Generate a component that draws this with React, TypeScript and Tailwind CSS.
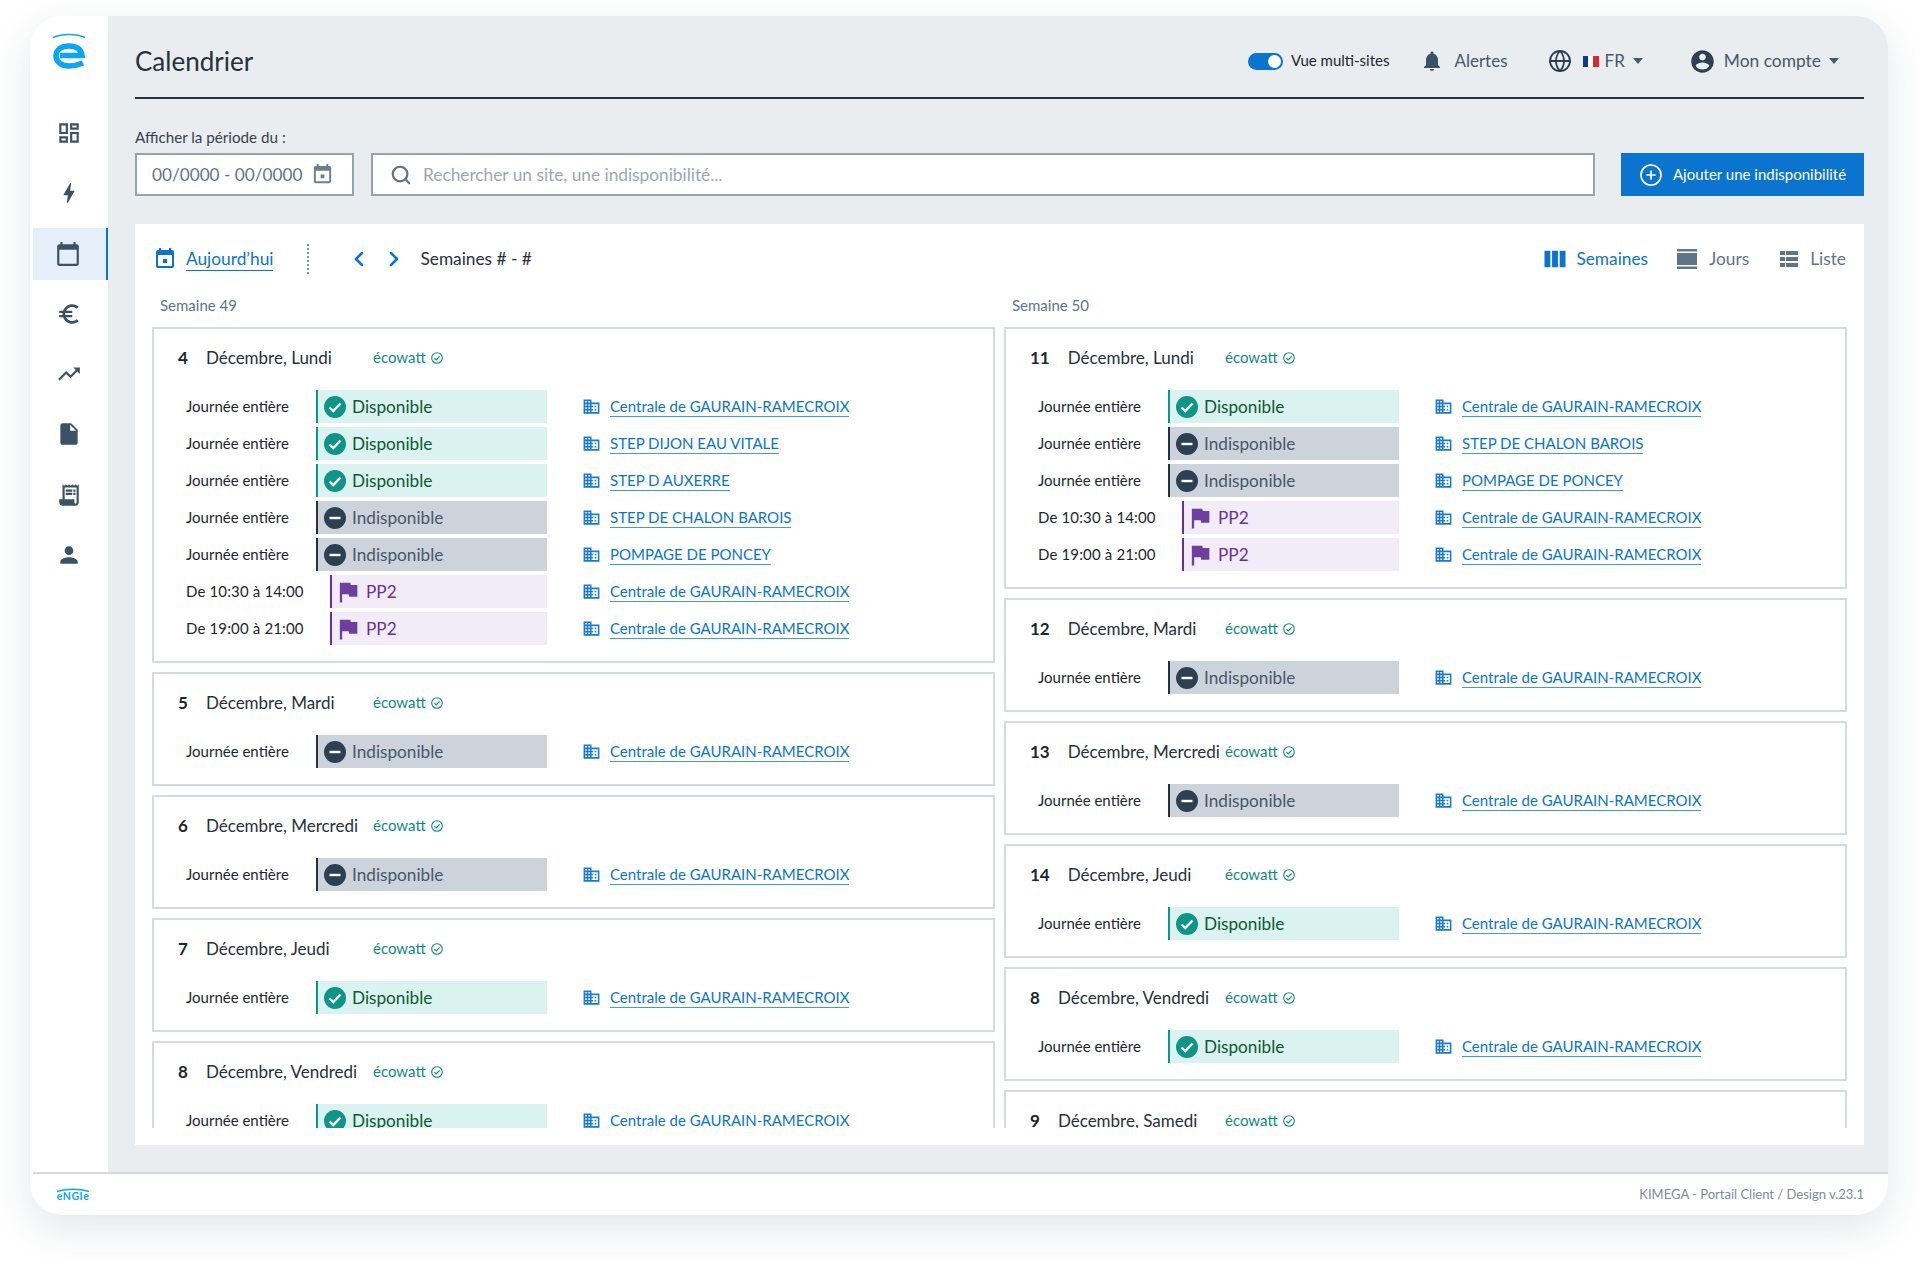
import React from 'react';
import { ChevronLeft, ChevronRight, CirclePlus, Globe, Search } from 'lucide-react';

const paths = {
    dashboard: 'M19 5v2h-4V5h4M9 5v6H5V5h4m10 8v6h-4v-6h4M9 17v2H5v-2h4M21 3h-8v6h8V3zM11 3H3v10h8V3zm10 8h-8v10h8V11zm-10 4H3v6h8v-6z',
    bolt: 'M11 21h-1l1-7H7.5c-.58 0-.57-.32-.38-.66.19-.34.05-.08.07-.12C8.48 10.94 10.42 7.54 13 3h1l-1 7h3.5c.49 0 .56.33.47.51l-.07.15C12.96 17.55 11 21 11 21z',
    calendar: 'M20 3h-1V1h-2v2H7V1H5v2H4c-1.1 0-2 .9-2 2v16c0 1.1.9 2 2 2h16c1.1 0 2-.9 2-2V5c0-1.1-.9-2-2-2zm0 18H4V8h16v13z',
    event: 'M14 12h-4v4h4v-4zM16 1v2H8V1H6v2H5c-1.11 0-1.99.9-1.99 2L3 19c0 1.1.89 2 2 2h14c1.1 0 2-.9 2-2V5c0-1.1-.9-2-2-2h-1V1h-2zm3 18H5V8h14v11z',
    euro: 'M15 18.5c-2.51 0-4.68-1.42-5.76-3.5H15v-2H8.58c-.05-.33-.08-.66-.08-1s.03-.67.08-1H15V9H9.24C10.32 6.92 12.5 5.5 15 5.5c1.61 0 3.09.59 4.23 1.57L21 5.3C19.41 3.87 17.3 3 15 3c-3.92 0-7.24 2.51-8.48 6H3v2h3.06c-.04.33-.06.66-.06 1s.02.67.06 1H3v2h3.52c1.24 3.49 4.56 6 8.48 6 2.31 0 4.41-.87 6-2.3l-1.78-1.77c-1.13.98-2.6 1.57-4.22 1.57z',
    trending: 'M16 6l2.29 2.29-4.88 4.88-4-4L2 16.59 3.41 18l6-6 4 4 6.3-6.29L22 12V6z',
    file: 'M6 2c-1.1 0-1.99.9-1.99 2L4 20c0 1.1.89 2 1.99 2H18c1.1 0 2-.9 2-2V8l-6-6H6zm7 7V3.5L18.5 9H13z',
    receipt: 'M19.5 3.5L18 2l-1.5 1.5L15 2l-1.5 1.5L12 2l-1.5 1.5L9 2 7.5 3.5 6 2v14H3v3c0 1.66 1.34 3 3 3h12c1.66 0 3-1.34 3-3V2l-1.5 1.5zM19 19c0 .55-.45 1-1 1s-1-.45-1-1v-3H8V5h11v14zM9 7h6v2H9zm7 0h2v2h-2zM9 10h6v2H9zm7 0h2v2h-2z',
    person: 'M12 12c2.21 0 4-1.79 4-4s-1.79-4-4-4-4 1.79-4 4 1.79 4 4 4zm0 2c-2.67 0-8 1.34-8 4v2h16v-2c0-2.66-5.33-4-8-4z',
    bell: 'M12 22c1.1 0 2-.9 2-2h-4c0 1.1.89 2 2 2zm6-6v-5c0-3.07-1.64-5.64-4.5-6.32V4c0-.83-.67-1.5-1.5-1.5s-1.5.67-1.5 1.5v.68C7.63 5.36 6 7.92 6 11v5l-2 2v1h16v-1l-2-2z',
    account: 'M12 2C6.48 2 2 6.48 2 12s4.48 10 10 10 10-4.48 10-10S17.52 2 12 2zm0 3c1.66 0 3 1.34 3 3s-1.34 3-3 3-3-1.34-3-3 1.34-3 3-3zm0 14.2c-2.5 0-4.71-1.28-6-3.22.03-1.99 4-3.08 6-3.08 1.99 0 5.97 1.09 6 3.08-1.29 1.94-3.5 3.22-6 3.22z',
    flag: 'M14.4 6L14 4H5v17h2v-7h5.6l.4 2h7V6z',
    domain: 'M12 7V3H2v18h20V7H12zM6 19H4v-2h2v2zm0-4H4v-2h2v2zm0-4H4V9h2v2zm0-4H4V5h2v2zm4 12H8v-2h2v2zm0-4H8v-2h2v2zm0-4H8V9h2v2zm0-4H8V5h2v2zm10 12h-8v-2h2v-2h-2v-2h2v-2h-2V9h8v10zm-2-8h-2v2h2v-2zm0 4h-2v2h2v-2z',
    weeks: 'M3 5h5v14H3zM9.5 5h5v14h-5zM16 5h5v14h-5z',
    days: 'M2 2h20v2.5H2zM2 6h20v12H2zM2 19.5h20V22H2z',
    list: 'M3 4h5v4H3zM9 4h12v4H9zM3 10h5v4H3zM9 10h12v4H9zM3 16h5v4H3zM9 16h12v4H9z',
};

const Icon = ({ name, className }: { name: keyof typeof paths; className: string }) => (
    <svg viewBox="0 0 24 24" fill="currentColor" className={className}>
        <path d={paths[name]} />
    </svg>
);

const Caret = ({ className }: { className: string }) => (
    <svg viewBox="0 0 10 6" fill="currentColor" className={className}>
        <path d="M0 0h10L5 6z" />
    </svg>
);

type Status = 'dispo' | 'indispo' | 'pp2';

interface Row {
    label: string;
    status: Status;
    site: string;
}

interface Day {
    num: string;
    date: string;
    rows: Row[];
}

const GAURAIN = 'Centrale de GAURAIN-RAMECROIX';
const full = (status: Status, site: string = GAURAIN): Row => ({ label: 'Journée entière', status, site });
const pp2 = (label: string): Row => ({ label, status: 'pp2', site: GAURAIN });

const week49: Day[] = [
    {
        num: '4',
        date: 'Décembre, Lundi',
        rows: [
            full('dispo'),
            full('dispo', 'STEP DIJON EAU VITALE'),
            full('dispo', 'STEP D AUXERRE'),
            full('indispo', 'STEP DE CHALON BAROIS'),
            full('indispo', 'POMPAGE DE PONCEY'),
            pp2('De 10:30 à 14:00'),
            pp2('De 19:00 à 21:00'),
        ],
    },
    { num: '5', date: 'Décembre, Mardi', rows: [full('indispo')] },
    { num: '6', date: 'Décembre, Mercredi', rows: [full('indispo')] },
    { num: '7', date: 'Décembre, Jeudi', rows: [full('dispo')] },
    { num: '8', date: 'Décembre, Vendredi', rows: [full('dispo')] },
];

const week50: Day[] = [
    {
        num: '11',
        date: 'Décembre, Lundi',
        rows: [
            full('dispo'),
            full('indispo', 'STEP DE CHALON BAROIS'),
            full('indispo', 'POMPAGE DE PONCEY'),
            pp2('De 10:30 à 14:00'),
            pp2('De 19:00 à 21:00'),
        ],
    },
    { num: '12', date: 'Décembre, Mardi', rows: [full('indispo')] },
    { num: '13', date: 'Décembre, Mercredi', rows: [full('indispo')] },
    { num: '14', date: 'Décembre, Jeudi', rows: [full('dispo')] },
    { num: '8', date: 'Décembre, Vendredi', rows: [full('dispo')] },
    { num: '9', date: 'Décembre, Samedi', rows: [full('dispo')] },
];

const StatusBar = ({ status }: { status: Status }) => {
    if (status === 'dispo') {
        return (
            <div className="flex h-[33px] w-[231px] items-center gap-[6px] border-l-2 border-[#0f9488] bg-[#daf3f1] pl-[6px] text-[17.2px] text-[#0b5a2c]">
                <svg viewBox="0 0 22 22" className="h-[22px] w-[22px]">
                    <circle cx="11" cy="11" r="11" fill="#0f9488" />
                    <path d="M5.5 11.5l3.8 3.6 7.2-7.6" fill="none" stroke="#fff" strokeWidth="2.4" />
                </svg>
                Disponible
            </div>
        );
    }
    if (status === 'indispo') {
        return (
            <div className="flex h-[33px] w-[231px] items-center gap-[6px] border-l-2 border-[#1f3446] bg-[#ccd3da] pl-[6px] text-[17.2px] text-[#46586a]">
                <svg viewBox="0 0 22 22" className="h-[22px] w-[22px]">
                    <circle cx="11" cy="11" r="11" fill="#2b4053" />
                    <rect x="5.5" y="9.8" width="11" height="2.4" fill="#fff" />
                </svg>
                Indisponible
            </div>
        );
    }
    return (
        <div className="flex h-[33px] w-[217px] items-center gap-[4px] border-l-2 border-[#6b2f9c] bg-[#f1ecf7] pl-[2px] text-[17.2px] text-[#6b2f9c]">
            <Icon name="flag" className="h-7 w-7 text-[#6e3f9f]" />
            PP2
        </div>
    );
};

const DayCard = ({ day }: { day: Day }) => (
    <div className="shrink-0 border-2 border-[#d5dbe3] pt-[17px] pb-4 pl-6">
        <div className="flex h-6 items-center">
            <div className="flex w-[195px] items-center gap-[18px] text-[17px] text-[#25313d]">
                <span className="font-bold text-[#1c2630]">{day.num}</span>
                <span>{day.date}</span>
            </div>
            <span className="-mt-px text-[15px] text-[#0f8a80]">écowatt</span>
            <svg viewBox="0 0 12 12" fill="none" stroke="#0f8a80" className="-mt-px ml-[5px] h-3 w-3">
                <circle cx="6" cy="6" r="5.3" strokeWidth="1.1" />
                <path d="M3.4 6.2l1.8 1.7 3.4-3.6" strokeWidth="1.2" />
            </svg>
        </div>
        <div className="mt-5 flex flex-col gap-1 pl-2">
            {day.rows.map((row, i) => (
                <div key={i} className="flex items-center">
                    <span className={`text-[15px] whitespace-nowrap text-[#1c2630] ${row.status === 'pp2' ? 'w-[144px] tracking-[0.15px]' : 'w-[130px]'}`}>
                        {row.label}
                    </span>
                    <StatusBar status={row.status} />
                    <Icon name="domain" className="ml-[35px] h-[19px] w-[19px] text-[#1a7bd0]" />
                    <a className="ml-[9px] border-b border-[#3d9ae8] text-[15px] leading-[20px] text-[#0a74cf]">{row.site}</a>
                </div>
            ))}
        </div>
    </div>
);

const Week = ({ title, days }: { title: string; days: Day[] }) => (
    <div className="flex min-h-0 min-w-0 flex-col">
        <div className="mb-3 h-5 pl-2 text-[15px] leading-5 text-[#5f7488]">{title}</div>
        <div className="flex min-h-0 flex-1 flex-col gap-[9px] overflow-hidden">
            {days.map((day, i) => (
                <DayCard key={i} day={day} />
            ))}
        </div>
    </div>
);

const navItems: (keyof typeof paths)[] = ['dashboard', 'bolt', 'calendar', 'euro', 'trending', 'file', 'receipt', 'person'];

const Sidebar = () => (
    <div className="w-[78px] shrink-0 pl-[3px]">
        <div className="flex h-[91px] justify-center pt-[17px] pr-1">
            <svg viewBox="0 0 34 36" className="h-9 w-[34px]" fill="none" stroke="#0aa5f5">
                <path d="M1 4.500C10 .5 24 .5 33 4.500" strokeWidth="1.400" />
                <path d="M8 22.500H30C29 16 24 13 17 13C9 13 4 17 4 23C4 29 9.500 33 17 33C22 33 26 32 31 30" strokeWidth="5.500" />
            </svg>
        </div>
        <div className="flex flex-col">
            {navItems.map((name) => (
                <div
                    key={name}
                    className={`mb-[8.250px] flex h-[52px] items-center justify-center pr-1 ${name === 'calendar' ? 'border-r-2 border-[#0a74cf] bg-[#e6eefa]' : ''}`}
                >
                    <Icon name={name} className="h-[26px] w-[26px] text-[#3a5268]" />
                </div>
            ))}
        </div>
    </div>
);

const Header = () => (
    <div className="flex h-[83px] items-center border-b-2 border-[#1f3446] pt-[9px] text-[#46586a]">
        <h1 className="text-[26px] text-[#25313d]">Calendrier</h1>
        <div className="ml-auto flex items-center">
            <div className="flex h-[17px] w-[35px] items-center justify-end rounded-full bg-[#0a74cf] pr-[2px]">
                <div className="h-[13px] w-[13px] rounded-full bg-white" />
            </div>
            <span className="-mt-px ml-2 text-[15px] text-[#1c2630]">Vue multi-sites</span>
            <Icon name="bell" className="ml-[31px] h-6 w-6 text-[#3a5268]" />
            <span className="ml-[10px] text-[17px]">Alertes</span>
            <Globe className="ml-10 h-6 w-6 text-[#2b4053]" strokeWidth={1.8} />
            <div className="ml-[11px] flex h-[11px] w-[16px]">
                <div className="flex-1 bg-[#0a3d91]" />
                <div className="flex-1 bg-white" />
                <div className="flex-1 bg-[#e1262d]" />
            </div>
            <span className="ml-[6px] text-[17px]">FR</span>
            <Caret className="ml-2 h-[6px] w-[10px]" />
            <Icon name="account" className="ml-[46px] h-[27px] w-[27px] text-[#2b4053]" />
            <span className="ml-2 text-[17.4px]">Mon compte</span>
            <Caret className="mr-[25px] ml-2 h-[6px] w-[10px]" />
        </div>
    </div>
);

const Filters = () => (
    <div className="mt-[28px]">
        <div className="mb-[6px] h-5 text-[15.2px] leading-5 text-[#33414f]">Afficher la période du :</div>
        <div className="flex h-[43px] items-stretch">
            <div className="flex w-[219px] items-center border-2 border-[#93a3b1] bg-white pl-[15px] text-[17.2px] text-[#5f7488]">
                00/0000 - 00/0000
                <Icon name="event" className="ml-[9px] h-[23px] w-[23px] text-[#6b7f91]" />
            </div>
            <div className="ml-[17px] flex flex-1 items-center border-2 border-[#93a3b1] bg-white pl-[17px] text-[17.3px] text-[#9aa8b5]">
                <Search className="mr-[11px] h-[22px] w-[22px] text-[#5f7488]" strokeWidth={2.4} />
                Rechercher un site, une indisponibilité...
            </div>
            <button className="ml-[26px] flex w-[243px] items-center bg-[#0a74cf] pl-[18px] text-[15px] text-white">
                <CirclePlus className="mr-[10px] h-6 w-6" strokeWidth={1.7} />
                Ajouter une indisponibilité
            </button>
        </div>
    </div>
);

const Toolbar = () => (
    <div className="flex h-6 items-center pr-[18px] pl-[18px] text-[17.3px]">
        <Icon name="event" className="h-6 w-6 text-[#0a74cf]" />
        <a className="ml-[9px] border-b border-[#0a74cf] leading-[22px] text-[#0a74cf]">Aujourd’hui</a>
        <div className="ml-[34px] h-[30px] border-l-2 border-dotted border-[#8496a6]" />
        <ChevronLeft className="ml-[38px] h-6 w-6 text-[#0a74cf]" strokeWidth={2.5} />
        <ChevronRight className="ml-[11px] h-6 w-6 text-[#0a74cf]" strokeWidth={2.5} />
        <span className="ml-[14px] text-[#25313d]">Semaines # - #</span>
        <div className="ml-auto flex items-center text-[#5f7488]">
            <Icon name="weeks" className="h-7 w-7 text-[#0a74cf]" />
            <span className="ml-[7px] text-[#0a74cf]">Semaines</span>
            <Icon name="days" className="ml-[27px] h-[24px] w-[24px]" />
            <span className="ml-[10px]">Jours</span>
            <Icon name="list" className="ml-[28px] h-6 w-6" />
            <span className="ml-[9px]">Liste</span>
        </div>
    </div>
);

const App = () => (
    <div className="h-[1263px] overflow-hidden bg-white pt-4 pl-[30px] font-['Lato',sans-serif]">
        <div className="flex h-[1199px] w-[1858px] flex-col overflow-hidden rounded-[32px] bg-white shadow-[0_14px_40px_rgba(40,60,80,0.13)]">
            <div className="flex min-h-0 flex-1">
                <Sidebar />
                <div className="flex min-w-0 flex-1 flex-col bg-[#e9edf0] pr-[24px] pb-[27px] pl-[27px]">
                    <Header />
                    <Filters />
                    <div className="mt-[28px] flex min-h-0 flex-1 flex-col bg-white pt-[23px] pb-[17px]">
                        <Toolbar />
                        <div className="mt-6 grid min-h-0 flex-1 grid-cols-2 gap-x-[9px] pr-[17px] pl-[17px]">
                            <Week title="Semaine 49" days={week49} />
                            <Week title="Semaine 50" days={week50} />
                        </div>
                    </div>
                </div>
            </div>
            <div className="ml-[3px] flex h-[43px] items-center border-t-2 border-[#d5dbe3] pr-[24px] pl-[23px]">
                <div className="flex flex-col items-center">
                    <svg viewBox="0 0 34 4" className="h-1 w-[34px]" fill="none" stroke="#0aa5f5">
                        <path d="M1 3.500C10 .5 24 .5 33 3.500" strokeWidth="1.500" />
                    </svg>
                    <span className="text-[10.500px] leading-[9px] font-bold tracking-[0.6px] text-[#0aa5f5]">eNGIe</span>
                </div>
                <span className="ml-auto text-[13px] text-[#7a8c9c]">KIMEGA - Portail Client / Design v.23.1</span>
            </div>
        </div>
    </div>
);

export default App;
